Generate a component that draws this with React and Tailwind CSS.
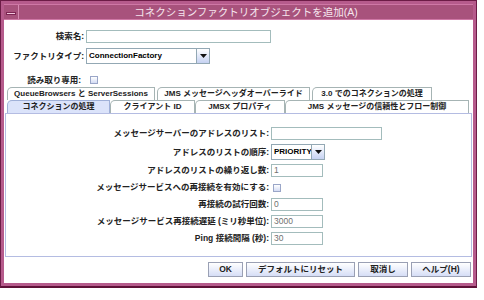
import clsx from "clsx";

const font = "font-['Liberation_Sans','Noto_Sans_CJK_JP',sans-serif]";

function Field({ w, value }) {
  return (
    <div
      className={clsx(
        "h-[13px] border border-[#a3bcbc] bg-white px-[2px] text-[8.5px] leading-[11px] text-[#707070]",
        w
      )}
    >
      {value}
    </div>
  );
}

function Combo({ w, value }) {
  return (
    <div className={clsx("flex h-[16px] border border-[#93a8b4] bg-white", w)}>
      <div className="flex-1 overflow-hidden whitespace-nowrap px-[2px] text-[8px] font-bold leading-[14px] text-black">
        {value}
      </div>
      <div className="flex w-[13px] items-center justify-center border-l border-[#93a8b4] bg-gradient-to-b from-white to-[#c6d2f2]">
        <svg width="7" height="4" viewBox="0 0 7 4">
          <path d="M0 0h7L3.5 4z" fill="#111" />
        </svg>
      </div>
    </div>
  );
}

function Check() {
  return <div className="h-[8px] w-[8px] border border-[#9aa6c8] bg-gradient-to-b from-white to-[#d4dcf4]" />;
}

function Tab({ label, w, active }) {
  return (
    <div
      className={clsx(
        "flex h-[13px] items-center justify-center whitespace-nowrap rounded-tl-[5px] border border-b-0 text-[8px] font-bold leading-none text-[#222]",
        active ? "border-[#9fb0d8] bg-[#dbe3fa]" : "border-[#a6b4b4] bg-white",
        w
      )}
    >
      {label}
    </div>
  );
}

function Btn({ label, w }) {
  return (
    <div
      className={clsx(
        "flex h-[15px] items-center justify-center whitespace-nowrap border border-[#9aa0b4] bg-gradient-to-b from-white to-[#d6def6] text-[8.5px] font-bold text-[#222]",
        w
      )}
    >
      {label}
    </div>
  );
}

function Row({ label, children }) {
  return (
    <div className="flex items-center">
      <div className="w-[265px] whitespace-nowrap pr-[2px] text-right text-[8.5px] font-bold text-[#222]">
        {label}
      </div>
      {children}
    </div>
  );
}

export default function App() {
  return (
    <div className={clsx("h-[300px] w-[484px] bg-white", font)}>
      <div className="flex h-[288px] w-[477px] flex-col border border-[#6c1c46] border-b-2 border-b-[#5e1238] bg-[#b65b8c] p-[3px]">
        {/* title bar */}
        <div className="flex h-[16px] border-y border-[#cf78a6] bg-[#a8527c]">
          <div className="flex w-[15px] items-center justify-center border-r border-[#d68ab2]">
            <div className="mt-[3px] h-[3px] w-[10px] border border-[#7c2452] bg-[#f2c6dc]" />
          </div>
          <div className="flex-1 whitespace-nowrap text-center text-[10.5px] leading-[14px] text-[#f6e6ee]">
            コネクションファクトリオブジェクトを追加(A)
          </div>
        </div>

        {/* content */}
        <div className="flex flex-1 flex-col bg-white">
          <div className="flex h-[67px] flex-col pt-[10px]">
            <div className="flex items-center">
              <div className="w-[82px] whitespace-nowrap pr-[2px] text-right text-[8.5px] font-bold text-[#222]">検索名:</div>
              <Field w="w-[185px]" value="" />
            </div>
            <div className="mt-[5px] flex items-center">
              <div className="w-[82px] whitespace-nowrap pr-[2px] text-right text-[8.5px] font-bold text-[#222]">ファクトリタイプ:</div>
              <Combo w="w-[124px]" value="ConnectionFactory" />
            </div>
            <div className="mt-[10px] flex items-center">
              <div className="w-[82px] whitespace-nowrap pr-[5px] text-right text-[8.5px] font-bold text-[#222]">読み取り専用:</div>
              <div className="pl-[4px]">
                <Check />
              </div>
            </div>
          </div>

          {/* tabs */}
          <div className="flex gap-[2px] pl-[3px]">
            <Tab label="QueueBrowsers と ServerSessions" w="w-[148px]" />
            <Tab label="JMS メッセージヘッダオーバーライド" w="w-[153px]" />
            <Tab label="3.0 でのコネクションの処理" w="w-[120px]" />
          </div>
          <div className="flex pl-[3px]">
            <Tab label="コネクションの処理" w="w-[103px]" active />
            <Tab label="クライアント ID" w="w-[85px]" />
            <Tab label="JMSX プロパティ" w="w-[90px]" />
            <Tab label="JMS メッセージの信頼性とフロー制御" w="w-[184px]" />
          </div>

          {/* panel */}
          <div className="mx-[1px] flex h-[144px] w-[467px] flex-col gap-[4px] border border-[#b4bce2] pt-[13px]">
            <Row label="メッセージサーバーのアドレスのリスト:">
              <Field w="w-[111px]" value="" />
            </Row>
            <Row label="アドレスのリストの順序:">
              <Combo w="w-[54px]" value="PRIORITY" />
            </Row>
            <Row label="アドレスのリストの繰り返し数:">
              <Field w="w-[52px]" value="1" />
            </Row>
            <Row label="メッセージサービスへの再接続を有効にする:">
              <div className="flex h-[13px] items-center pl-[2px]">
                <Check />
              </div>
            </Row>
            <Row label="再接続の試行回数:">
              <Field w="w-[52px]" value="0" />
            </Row>
            <Row label="メッセージサービス再接続遅延 (ミリ秒単位):">
              <Field w="w-[52px]" value="3000" />
            </Row>
            <Row label="Ping 接続間隔 (秒):">
              <Field w="w-[52px]" value="30" />
            </Row>
          </div>

          {/* buttons */}
          <div className="flex flex-1 items-start justify-end gap-[3px] pr-[2px] pt-[5px]">
            <Btn label="OK" w="w-[35px]" />
            <Btn label="デフォルトにリセット" w="w-[109px]" />
            <Btn label="取消し" w="w-[50px]" />
            <Btn label="ヘルプ(H)" w="w-[60px]" />
          </div>
        </div>
      </div>
    </div>
  );
}
